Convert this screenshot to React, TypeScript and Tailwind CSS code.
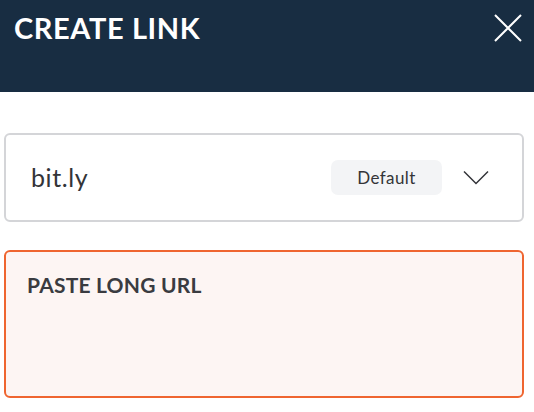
export default function App() {
  return (
    <div className="h-[412px] w-[534px] overflow-hidden bg-white font-['Lato',sans-serif]">
      <header className="flex h-[92px] items-start justify-between bg-[#182d42] pl-[14px] pr-[12px] pt-[11px]">
        <h1 className="text-[29px] font-bold leading-[34px] tracking-[0.6px] text-white">CREATE LINK</h1>
        <button aria-label="Close" className="mt-[3px] text-white">
          <svg width="28" height="28" viewBox="0 0 28 28" fill="none" stroke="currentColor" strokeWidth="2">
            <path d="M1 1L27 27M27 1L1 27" />
          </svg>
        </button>
      </header>

      <div className="flex w-[524px] flex-col gap-[28px] pl-[4px] pt-[41px]">
        <div className="flex h-[89px] items-center rounded-[6px] border-2 border-[#d4d5d8] pl-[25px] pr-[33px]">
          <span className="flex-1 text-[25px] tracking-[0.6px] text-[#333438]">bit.ly</span>
          <span className="flex h-[35px] w-[111px] items-center justify-center rounded-[7px] bg-[#f3f4f6] text-[17px] tracking-[0.4px] text-[#333438]">
            Default
          </span>
          <svg className="ml-[21px]" width="26" height="15" viewBox="0 0 26 15" fill="none" stroke="#333438" strokeWidth="1.5">
            <path d="M1 1.5L13 13.5L25 1.5" />
          </svg>
        </div>

        <div className="h-[148px] rounded-[6px] border-2 border-[#ef6530] bg-[#fdf5f3] pl-[21px] pt-[17px]">
          <p className="text-[21px] font-bold tracking-[0.2px] text-[#3a3b40]">PASTE LONG URL</p>
        </div>
      </div>
    </div>
  );
}
